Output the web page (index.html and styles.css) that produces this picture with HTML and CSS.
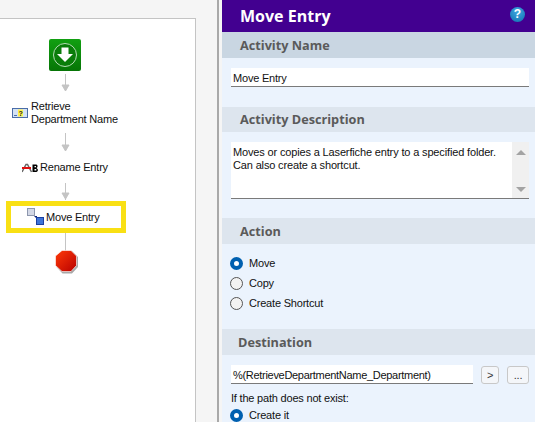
FILE: index.html
```html
<!DOCTYPE html>
<html>
<head>
<meta charset="utf-8">
<title>Move Entry</title>
<link rel="stylesheet" href="styles.css">
</head>
<body>
<div class="app">
  <div class="left">
    <div class="canvas">
      <svg class="wires" width="195" height="404" viewBox="0 0 195 404">
        <g stroke="#c4c4c4" stroke-width="1" fill="#c4c4c4">
          <path d="M65.5 55V72" fill="none"/><path d="M62 66H69L65.500 72Z"/>
          <path d="M65.5 114V132" fill="none"/><path d="M62 126H69L65.500 132Z"/>
          <path d="M65.5 164V181" fill="none"/><path d="M62 174H69L65.500 180Z"/>
          <path d="M65.5 214V232" fill="none"/>
        </g>
      </svg>
      <div class="start">
        <svg width="32" height="32" viewBox="0 0 32 32">
          <defs><linearGradient id="g" x1="0" y1="0" x2="0" y2="1"><stop offset="0" stop-color="#12a012"/><stop offset="1" stop-color="#067506"/></linearGradient></defs>
          <rect x="0" y="0" width="32" height="32" rx="2" fill="url(#g)"/>
          <circle cx="16" cy="16" r="11.5" fill="#0a7d0a" stroke="#b6dcb6" stroke-width="1"/>
          <path d="M12.5 8.500H19.500V15H24L16 23L8 15H12.500Z" fill="#fff"/>
        </svg>
      </div>
      <div class="node retrieve">
        <svg width="16" height="10" viewBox="0 0 16 10"><rect x="0.500" y="0.500" width="15" height="9" fill="#d4e2f4" stroke="#4a6da8"/><rect x="6" y="1.500" width="5" height="7" fill="#fff24a"/><text x="6.500" y="8" class="q">?</text><path d="M2 7.500H5" stroke="#4a6da8"/></svg>
        <span>Retrieve<br>Department Name</span>
      </div>
      <div class="node rename">
        <svg width="18" height="10" viewBox="0 0 18 10"><path d="M0 9L4 1.500H5.500L9.500 9" fill="none" stroke="#666" stroke-width="1.500"/><path d="M0 5H9" stroke="#e01010" stroke-width="2"/><path d="M10.500 1.500H14.500L15.500 2.500V4L14.500 5L15.800 6.200V8L14.500 9H10.500ZM12.500 3V4.200H14V3ZM12.500 6V7.500H14.300V6Z" fill="#000" fill-rule="evenodd"/></svg>
        <span>Rename Entry</span>
      </div>
      <div class="highlight">
        <svg width="17" height="17" viewBox="0 0 17 17"><rect x="0.500" y="0.500" width="7" height="7" fill="#d3d8e6" stroke="#8d97ad"/><path d="M7 8L10 8L10 11Z" fill="#10247a"/><rect x="9.500" y="9.500" width="7" height="7" fill="#3d74d8" stroke="#1c3fa0"/></svg>
        <span>Move Entry</span>
      </div>
      <div class="stop">
        <svg width="24" height="24" viewBox="0 0 24 24">
          <defs><linearGradient id="r" x1="0" y1="0" x2="1" y2="1"><stop offset="0" stop-color="#ff3a08"/><stop offset="1" stop-color="#b80000"/></linearGradient></defs>
          <path d="M7.500 1H17L23 7V17L17 23.500H7.500L1.500 17V7Z" fill="#a8a8a8"/>
          <path d="M7 0.500H16L21.500 6V15.500L16 21.500H7L0.500 15.500V6Z" fill="url(#r)" stroke="#fff" stroke-width="0.600"/>
        </svg>
      </div>
    </div>
  </div>
  <div class="divider"></div>
  <div class="panel">
    <div class="title">
      <span>Move Entry</span>
      <span class="help">?</span>
    </div>
    <div class="head first">Activity Name</div>
    <div class="body name-body">
      <div class="field">Move Entry</div>
    </div>
    <div class="head desc">Activity Description</div>
    <div class="body desc-body">
      <div class="area">
        <div class="area-text">Moves or copies a Laserfiche entry to a specified folder.<br>Can also create a shortcut.</div>
        <div class="scroll"><i class="up"></i><i class="down"></i></div>
      </div>
    </div>
    <div class="head">Action</div>
    <div class="body action-body">
      <div class="radio"><i class="dot on"></i>Move</div>
      <div class="radio"><i class="dot"></i>Copy</div>
      <div class="radio"><i class="dot"></i>Create Shortcut</div>
    </div>
    <div class="head dest">Destination</div>
    <div class="body dest-body">
      <div class="dest-row">
        <div class="field grow path">%(RetrieveDepartmentName_Department)</div>
        <div class="btn small">&gt;</div>
        <div class="btn">...</div>
      </div>
      <div class="note">If the path does not exist:</div>
      <div class="radio"><i class="dot on"></i>Create it</div>
    </div>
  </div>
</div>
</body>
</html>
```
FILE: styles.css
```css
* { box-sizing: border-box; }
html, body { margin: 0; padding: 0; }
body {
  width: 535px;
  height: 422px;
  overflow: hidden;
  background: #f5f5f5;
  font-family: "Liberation Sans", Arial, sans-serif;
  font-size: 11px;
  letter-spacing: -0.2px;
  color: #111;
}
.app { display: flex; height: 422px; }
.left { width: 217px; padding-top: 18px; flex: none; }
.canvas {
  position: relative;
  width: 196px;
  height: 404px;
  background: #fff;
  border-top: 1px solid #c4c4c4;
  border-right: 1px solid #c4c4c4;
}
.wires { position: absolute; left: 0; top: 0; }
.start { position: absolute; left: 49px; top: 20px; width: 32px; height: 32px; }
.start svg, .stop svg, .node svg, .highlight svg { display: block; flex: none; }
.node { position: absolute; display: flex; align-items: center; line-height: 13px; white-space: nowrap; }
.retrieve { left: 12px; top: 81px; gap: 3px; }
.q { font: bold 7px "Liberation Sans", sans-serif; fill: #222; }
.rename { left: 22px; top: 142px; gap: 0; }
.highlight {
  position: absolute;
  left: 6px;
  top: 182px;
  width: 120px;
  height: 32px;
  border: 5px solid #f9e014;
  background: #fff;
  display: flex;
  align-items: center;
  padding-left: 16px;
  gap: 2px;
  white-space: nowrap;
}
.highlight svg { margin-top: -1px; }
.stop { position: absolute; left: 55px; top: 231px; width: 24px; height: 24px; }
.divider { width: 2px; flex: none; background: #a9a9a9; }
.panel { margin-left: 3px; width: 313px; flex: none; background: #ebf3fd; }
.title {
  height: 32px;
  background: #420090;
  color: #fff;
  font: 700 16px/30px "Open Sans", sans-serif;
  letter-spacing: 0;
  padding: 0 6px 0 18px;
  display: flex;
  justify-content: space-between;
  align-items: center;
}
.help {
  width: 15px;
  height: 15px;
  border-radius: 50%;
  background: radial-gradient(circle at 50% 30%, #40a8e0, #0f6fb0);
  color: #fff;
  font: 700 12px/15px "Liberation Sans", sans-serif;
  text-align: center;
  margin-right: 4px;
  margin-top: -3px;
}
.head {
  height: 26px;
  background: #dde5ee;
  color: #5a5a5a;
  font: 700 12.7px/26px "Open Sans", sans-serif;
  letter-spacing: 0;
  padding-left: 18px;
}
.head.first { background: #c9d6e2; }
.head.desc { height: 25px; line-height: 24px; }
.head.dest { padding-left: 16px; }
.body { padding: 0 6px 0 9px; }
.name-body { height: 49px; padding-top: 10px; }
.desc-body { height: 86px; padding-top: 10px; }
.action-body { height: 85px; padding-top: 9px; }
.dest-body { padding-top: 10px; }
.field {
  height: 19px;
  background: #fff;
  border-bottom: 1px solid #7a7a7a;
  padding-left: 2px;
  line-height: 20px;
  white-space: nowrap;
}
.path { letter-spacing: -0.3px; }
.area {
  height: 57px;
  background: #fff;
  border-bottom: 1px solid #7a7a7a;
  display: flex;
  justify-content: space-between;
}
.area-text { padding: 4px 0 0 2px; line-height: 13px; white-space: nowrap; min-width: 0; letter-spacing: -0.15px; }
.scroll {
  width: 17px;
  flex: none;
  background: #f0f0f0;
  display: flex;
  flex-direction: column;
  justify-content: space-between;
  align-items: center;
  padding: 8px 0 6px;
}
.up, .down { width: 0; height: 0; border-left: 5px solid transparent; border-right: 5px solid transparent; }
.up { border-bottom: 5px solid #a3a3a3; }
.down { border-top: 5px solid #a3a3a3; }
.radio { height: 20px; display: flex; align-items: center; gap: 6px; white-space: nowrap; }
.dot {
  width: 13px;
  height: 13px;
  border-radius: 50%;
  border: 1px solid #555;
  background: #f2f2f2;
  flex: none;
  margin-left: -1px;
}
.dot.on { border: 4px solid #0060b0; background: #fff; }
.dest-row { display: flex; align-items: flex-start; gap: 8px; }
.grow { flex: 1; }
.btn {
  width: 22px;
  height: 18px;
  margin-top: 1px;
  background: #f4f6f9;
  border: 1px solid #c8c8c8;
  border-radius: 3px;
  font-size: 11px;
  line-height: 17px;
  text-align: center;
  color: #333;
  flex: none;
}
.btn.small { width: 18px; }
.note { margin-top: 7px; line-height: 14px; }
.dest-body .radio { height: 18px; margin-top: 1px; }
```
